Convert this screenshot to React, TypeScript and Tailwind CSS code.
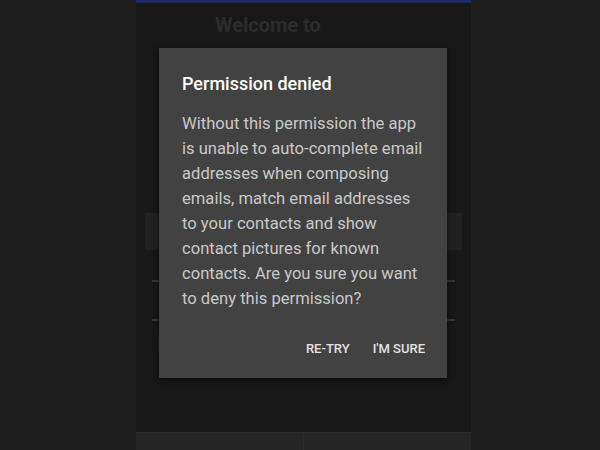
import React from "react";

export default function App() {
  return (
    <div className="w-[600px] h-[450px] bg-[#1f1f1f] flex pl-[136px] overflow-hidden" style={{ fontFamily: "Roboto, 'Noto Sans', sans-serif" }}>
      <div className="relative w-[335px] h-[450px] bg-[#181818] flex flex-col">
        <div className="h-[3px] bg-[#1f2a66]" />
        <div className="flex-1 flex flex-col">
          <div className="pt-[9px] pl-[79px] text-[20px] font-bold text-[#2c2c2c] leading-[26px]">Welcome to</div>
          <div className="mt-[175px] mx-[9px] h-[37px] bg-[#212121]" />
          <div className="mt-[30px] mx-[16px] h-[2px] bg-[#353535]" />
          <div className="mt-[37px] mx-[16px] h-[2px] bg-[#353535]" />
          <div className="mt-[14px] ml-[22px] w-[2px] h-[16px] bg-[#2a2a2a]" />
        </div>
        <div className="h-[18px] flex bg-[#262626] border-t border-[#2c2c2c]">
          <div className="flex-1 border-r border-[#2c2c2c]" />
          <div className="flex-1" />
        </div>
        <div className="absolute left-[23px] top-[48px] w-[288px] h-[330px] bg-[#424242] shadow-[0_2px_6px_rgba(0,0,0,0.6)] flex flex-col">
          <div className="pt-[23px] px-[23px] text-[18px] font-medium text-white leading-[26px]">Permission denied</div>
          <div className="mt-[14px] px-[23px] text-[16.6px] text-[#c9c9c9] leading-[25px]">
            Without this permission the app is unable to auto-complete email addresses when composing emails, match email addresses to your contacts and show contact pictures for known contacts. Are you sure you want to deny this permission?
          </div>
          <div className="mt-auto mb-[21px] flex justify-end gap-[23px] pr-[22px] text-[13px] font-medium text-[#e3e3e3] leading-[16px]">
            <span>RE-TRY</span>
            <span>I'M SURE</span>
          </div>
        </div>
      </div>
    </div>
  );
}
